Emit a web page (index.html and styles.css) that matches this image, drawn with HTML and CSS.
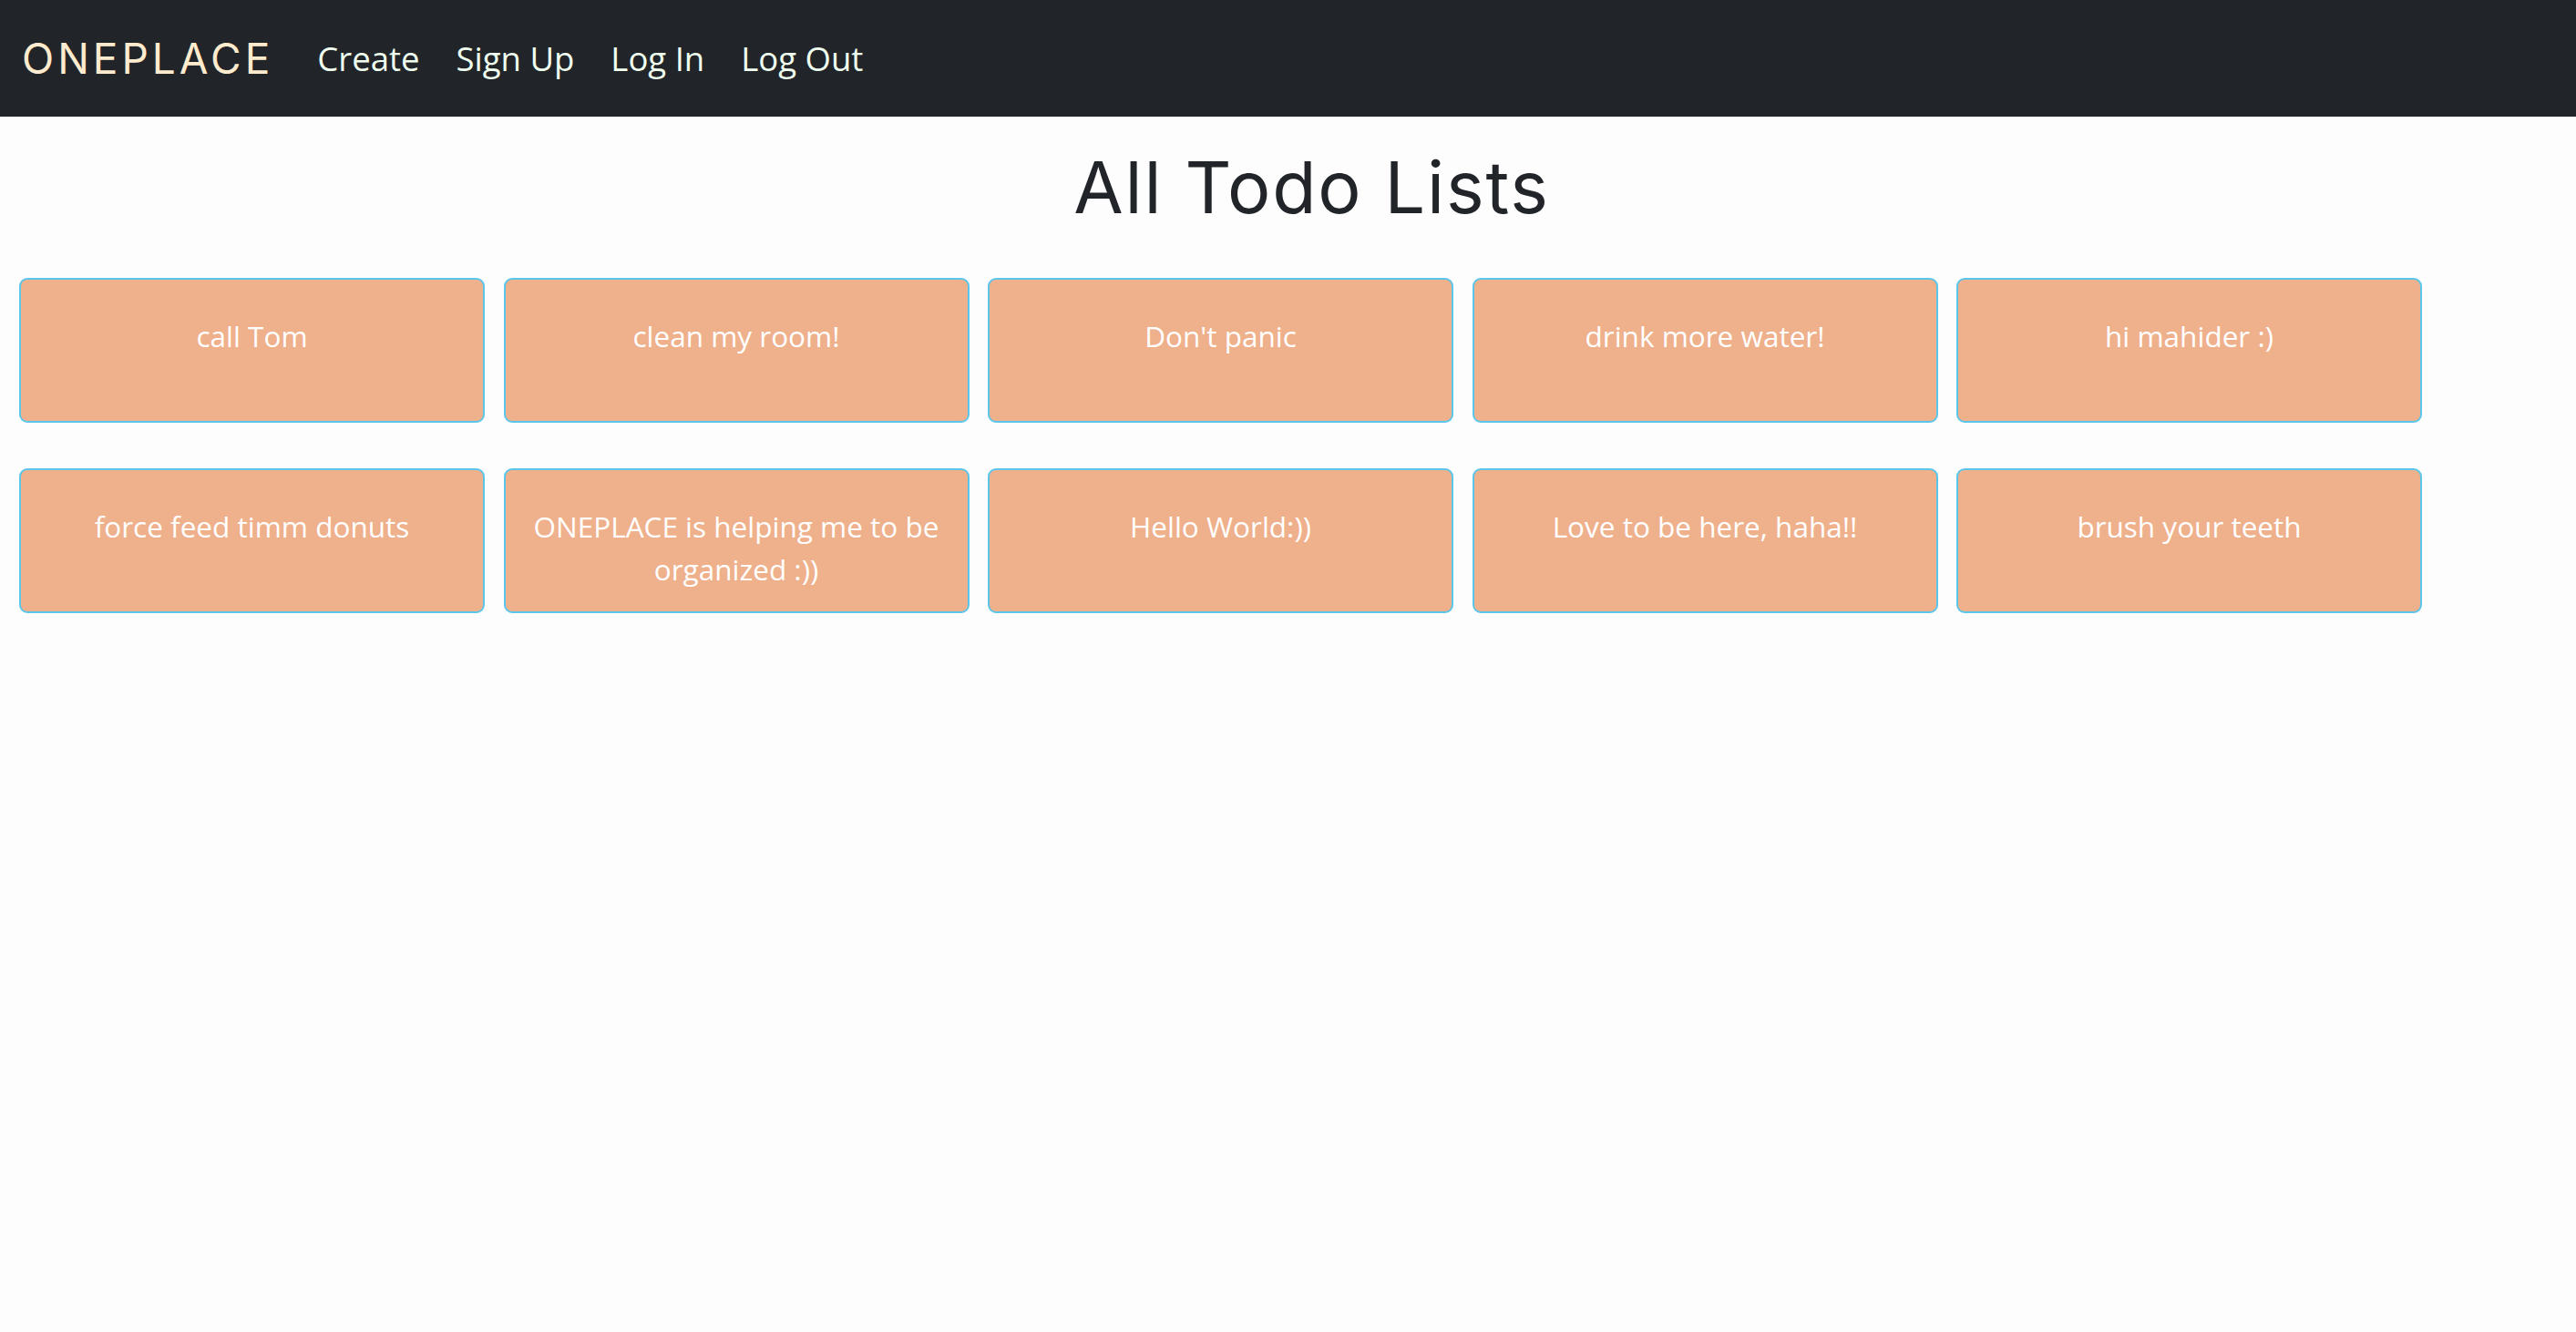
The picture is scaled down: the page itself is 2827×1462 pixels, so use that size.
FILE: index.html
```html
<!DOCTYPE html>
<html lang="en">
<head>
<meta charset="utf-8">
<title>ONEPLACE - All Todo Lists</title>
<link rel="stylesheet" href="styles.css">
</head>
<body>
<nav class="navbar">
  <a class="brand" href="#">ONEPLACE</a>
  <ul class="nav">
    <li><a class="nav-link" href="#">Create</a></li>
    <li><a class="nav-link" href="#">Sign Up</a></li>
    <li><a class="nav-link" href="#">Log In</a></li>
    <li><a class="nav-link" href="#">Log Out</a></li>
  </ul>
</nav>
<main class="page">
  <h1 class="title">All Todo Lists</h1>
  <div class="grid">
    <div class="card"><p class="card-text">call Tom</p></div>
    <div class="card"><p class="card-text">clean my room!</p></div>
    <div class="card"><p class="card-text">Don't panic</p></div>
    <div class="card"><p class="card-text">drink more water!</p></div>
    <div class="card"><p class="card-text">hi mahider :)</p></div>
    <div class="card"><p class="card-text">force feed timm donuts</p></div>
    <div class="card"><p class="card-text">ONEPLACE is helping me to be organized :))</p></div>
    <div class="card"><p class="card-text">Hello World:))</p></div>
    <div class="card"><p class="card-text">Love to be here, haha!!</p></div>
    <div class="card"><p class="card-text">brush your teeth</p></div>
  </div>
</main>
</body>
</html>
```

FILE: styles.css
```css
* { box-sizing: border-box; }

html, body {
  margin: 0;
  padding: 0;
  background: #fdfdfd;
}

body {
  font-family: "Open Sans", "Noto Sans", sans-serif;
  color: #212529;
}

.navbar {
  height: 128px;
  background: #212529;
  display: flex;
  align-items: center;
  padding: 0 0 0 24px;
}

.brand {
  font-family: Inter, "Noto Sans", sans-serif;
  font-weight: 400;
  font-size: 46px;
  letter-spacing: 4px;
  color: #ffebcd;
  text-decoration: none;
  margin-right: 28px;
  line-height: 1;
}

.nav {
  display: flex;
  list-style: none;
  margin: 0;
  padding: 0;
}

.nav-link {
  display: block;
  font-size: 36.5px;
  line-height: 54px;
  color: #f0fff0;
  text-decoration: none;
  padding: 0 20px;
}

.page {
  padding: 0 21px;
}

.title {
  font-family: Inter, "Noto Sans", sans-serif;
  font-weight: 400;
  font-size: 79px;
  letter-spacing: 1.8px;
  line-height: 94px;
  margin: 30px 0 53px;
  padding-left: 52px;
  text-align: center;
  color: #212529;
}

.grid {
  display: grid;
  grid-template-columns: repeat(5, 511px);
  column-gap: 20.5px;
  row-gap: 50px;
}

.card {
  height: 159px;
  background: #efb08c;
  border: 2px solid #5cc6ea;
  border-radius: 9px;
  padding: 38px 20px 0;
}

.card-text {
  margin: 0;
  font-size: 31.5px;
  line-height: 47px;
  color: #ffffff;
  text-align: center;
}
```
